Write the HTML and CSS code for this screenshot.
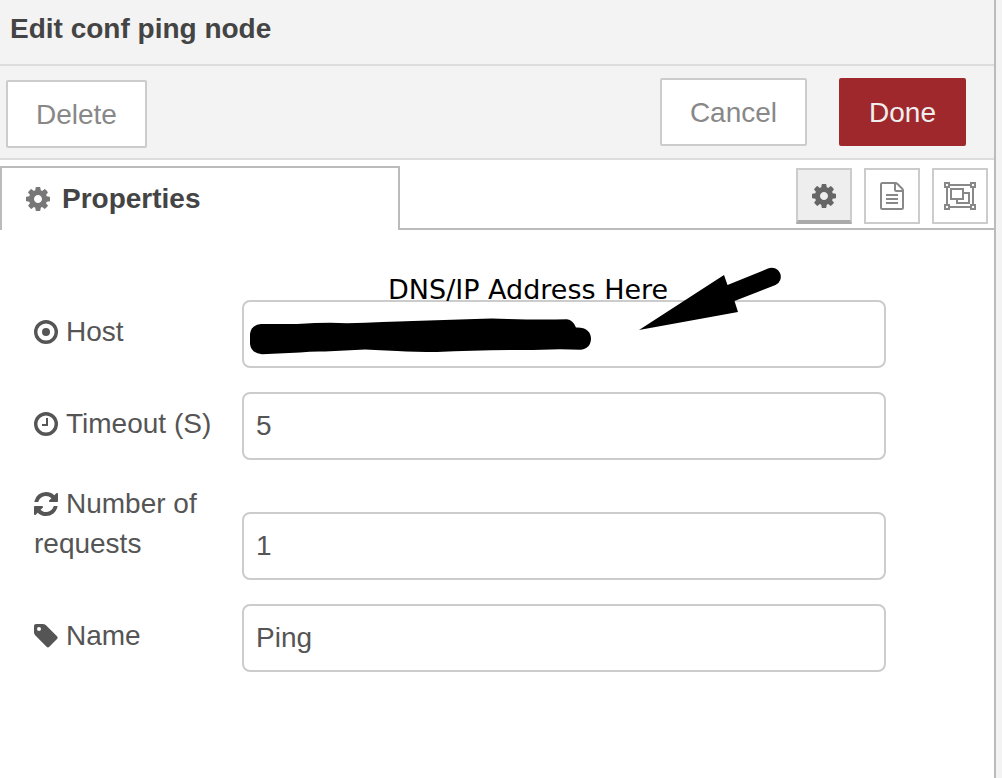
FILE: index.html
```
<!DOCTYPE html>
<html lang="en">
<head>
<meta charset="utf-8">
<title>Edit conf ping node</title>
<link rel="stylesheet" href="styles.css">
</head>
<body>
<svg class="symbols" aria-hidden="true">
  <symbol id="cog" viewBox="128 128 1536 1536"><path d="M1152 896q0-106-75-181t-181-75-181 75-75 181 75 181 181 75 181-75 75-181zm512-109v222q0 12-8 23t-20 13l-185 28q-19 54-39 91 35 50 107 138 10 12 10 25t-9 23q-27 37-99 108t-94 71q-12 0-26-9l-138-108q-44 23-91 38-16 136-29 186-7 28-36 28h-222q-14 0-24.5-8.5t-11.5-21.5l-28-184q-49-16-90-37l-141 107q-10 9-25 9-14 0-25-11-126-114-165-168-7-10-7-23 0-12 8-23 15-21 51-66.5t54-70.5q-27-50-41-99l-183-27q-13-2-21-12.5t-8-23.5v-222q0-12 8-23t19-13l186-28q14-46 39-92-40-57-107-138-10-12-10-24 0-10 9-23 26-36 98.5-107.5t94.5-71.5q13 0 26 10l138 107q44-23 91-38 16-136 29-186 7-28 36-28h222q14 0 24.5 8.5t11.5 21.5l28 184q49 16 90 37l142-107q9-9 24-9 13 0 25 10 129 119 165 170 7 8 7 22 0 12-8 23-15 21-51 66.5t-54 70.5q26 50 41 98l183 28q13 2 21 12.5t8 23.5z"/></symbol>
</svg>
<main class="tray">
  <header class="tray-header"><h1 class="tray-title">Edit conf ping node</h1></header>
  <div class="toolbar">
    <button class="button button-delete" type="button">Delete</button>
    <button class="button button-cancel" type="button">Cancel</button>
    <button class="button button-done" type="button">Done</button>
  </div>
  <div class="tabs">
    <button class="tab" type="button"><svg class="icon" aria-hidden="true"><use href="#cog"/></svg>Properties</button>
    <div class="tab-tools">
      <button class="tool tool-active" type="button" aria-label="Properties"><svg class="icon" aria-hidden="true"><use href="#cog"/></svg></button>
      <button class="tool" type="button" aria-label="Description">
        <svg class="icon-file" viewBox="0 0 24 28" aria-hidden="true"><path class="line" d="M15.5 1H2.5Q1 1 1 2.500V25.500Q1 27 2.500 27H21.500Q23 27 23 25.500V8.500Q23 7.500 22 6.500L17.500 2Q16.500 1 15.500 1ZM15 1V7.500Q15 9 16.500 9H23"/><path class="rule" d="M6 13H18M6 17H18M6 21H18"/></svg>
      </button>
      <button class="tool" type="button" aria-label="Appearance">
        <svg class="icon-group" viewBox="0 0 32 28" aria-hidden="true"><path class="line" d="M6 3H26M6 25H26M3 6V22M29 6V22M1 1H5V5H1ZM27 1H31V5H27ZM1 23H5V27H1ZM27 23H31V27H27ZM7 7H19V17H7ZM19 11H25V21H13V17"/></svg>
      </button>
    </div>
  </div>
  <form class="form">
    <div class="row">
      <label class="label" for="host"><svg class="icon icon-label" viewBox="0 0 24 24" aria-hidden="true"><circle class="ring" cx="12" cy="12" r="10.300"/><circle cx="12" cy="12" r="4"/></svg>Host</label>
      <div class="field">
        <input class="input" id="host" type="text">
        <svg class="marks" viewBox="242 260 560 110" aria-hidden="true">
          <path d="M250 334Q251 325 261 324L297 324Q328 322 347 323.300Q385 322 413 321L475 319Q492 318 508 319Q540 320 567 319.300Q573 320 576 327.500C586 327 591 332 591 338.500C591 345 587 349.700 580 349.700L560 349.300L533 350Q480 350 437 352Q415 352 397 351Q380 350 365 349.500L325 351.500Q313 351 300 352.500L262 354.300Q251 353 250 344Z"/>
          <path d="M639 330L724 275L727.500 285L768 268.500A9 9 0 0 1 775.500 285L734.500 301L738 312Z"/>
        </svg>
        <span class="note">DNS/IP Address Here</span>
      </div>
    </div>
    <div class="row">
      <label class="label" for="timeout"><svg class="icon icon-label" viewBox="0 0 24 24" aria-hidden="true"><circle class="ring" cx="12" cy="12" r="10.300"/><path class="hand" d="M13 6V13H8"/></svg>Timeout (S)</label>
      <div class="field"><input class="input" id="timeout" type="text" value="5"></div>
    </div>
    <div class="row">
      <label class="label" for="requests"><svg class="icon icon-label" viewBox="128 128 1536 1536" aria-hidden="true"><path d="M1639 1056q0 5-1 7-64 268-268 434.500t-478 166.500q-146 0-282.500-55t-243.500-157l-129 129q-19 19-45 19t-45-19-19-45v-448q0-26 19-45t45-19h448q26 0 45 19t19 45-19 45l-137 137q71 66 161 102t187 36q134 0 250-65t186-179q11-17 53-117 8-23 30-23h192q13 0 22.500 9.500t9.500 22.500zm25-800v448q0 26-19 45t-45 19h-448q-26 0-45-19t-19-45 19-45l138-138q-148-137-349-137-134 0-250 65t-186 179q-11 17-53 117-8 23-30 23h-199q-13 0-22.500-9.500t-9.500-22.500v-7q65-268 270-434.500t480-166.500q146 0 284 55.500t245 156.500l130-129q19-19 45-19t45 19 19 45z"/></svg>Number of requests</label>
      <div class="field"><input class="input" id="requests" type="text" value="1"></div>
    </div>
    <div class="row">
      <label class="label" for="name"><svg class="icon icon-label" viewBox="0 0 24 24" aria-hidden="true"><path fill-rule="evenodd" d="M0 2Q0 0 2 0H8.500Q10.500 0 12 1.300L23 12.300Q24.200 13.700 23 15L15.300 22.800Q14 24 12.600 22.800L1.400 11.500Q0 10 0 8.500ZM5 3A2 2 0 1 0 5 7A2 2 0 1 0 5 3Z"/></svg>Name</label>
      <div class="field"><input class="input" id="name" type="text" value="Ping"></div>
    </div>
  </form>
</main>
</body>
</html>
```
FILE: styles.css
```
* { box-sizing: border-box; }
body {
  margin: 0;
  background: #f3f3f3;
  color: #555;
  font: 28px/40px "Liberation Sans", Arial, sans-serif;
}
button, input { font: inherit; color: inherit; }
.symbols { display: none; }
.tray {
  display: flex;
  flex-direction: column;
  min-height: 100vh;
  margin-right: 6px;
  border-right: 2px solid #bbb;
  background: #fff;
}
.tray-header {
  padding: 9px 10px 15px;
  border-bottom: 2px solid #ddd;
  background: #f3f3f3;
}
.tray-title {
  margin: 0;
  color: #444;
  font-size: 28px;
  line-height: 40px;
}
.toolbar {
  display: flex;
  align-items: flex-start;
  padding: 12px 28px 10px 6px;
  border-bottom: 2px solid #ddd;
  background: #f3f3f3;
}
.button {
  height: 68px;
  padding: 2px 28px 0;
  border: 2px solid #ccc;
  border-radius: 2px;
  background: #fff;
  color: #888;
}
.button-delete { margin: 2px auto 0 0; }
.button-cancel { margin-right: 32px; }
.button-done {
  border-color: #9e282b;
  background: #9e282b;
  color: #eee;
}
.tabs {
  display: flex;
  justify-content: space-between;
  height: 70px;
  padding-top: 6px;
  background: linear-gradient(#bbb, #bbb) bottom / 100% 2px no-repeat;
}
.tab {
  display: flex;
  align-items: center;
  gap: 12px;
  width: 400px;
  padding: 0 24px;
  border: 2px solid #bbb;
  border-bottom: 0;
  background: #fff;
  color: #444;
  font-weight: bold;
}
.tab .icon { fill: #777; }
.tab-tools {
  display: flex;
  gap: 12px;
  padding: 2px 6px 0 0;
}
.tool {
  display: flex;
  align-items: center;
  justify-content: center;
  width: 56px;
  height: 56px;
  padding: 0;
  border: 2px solid #ccc;
  background: #fff;
}
.tool-active {
  padding-top: 2px;
  border-bottom: 4px solid #aaa;
  background: #eee;
}
.tool .icon { fill: #666; }
.icon { width: 24px; height: 24px; flex: none; fill: #555; }
.icon-file { width: 24px; height: 28px; }
.icon-group { width: 32px; height: 28px; }
.line, .rule { fill: none; stroke: #888; stroke-width: 2; }
.icon-label { margin-right: 8px; vertical-align: -3px; }
.ring { fill: none; stroke: #555; stroke-width: 3.400; }
.hand { fill: none; stroke: #555; stroke-width: 2; }
.form {
  display: flex;
  flex-direction: column;
  gap: 24px;
  padding: 70px 40px 24px 34px;
}
.row {
  display: flex;
  align-items: flex-end;
}
.label {
  width: 208px;
  padding: 0 28px 16px 0;
}
.field { position: relative; width: 70%; }
.input {
  display: block;
  width: 100%;
  height: 68px;
  padding: 0 12px;
  border: 2px solid #ccc;
  border-radius: 8px;
  background: #fff;
}
.marks {
  position: absolute;
  top: -40px;
  left: 0;
  width: 560px;
  height: 110px;
  pointer-events: none;
}
.note {
  position: absolute;
  top: -30px;
  left: 146px;
  color: #000;
  font: 27px/40px "DejaVu Sans", Verdana, sans-serif;
  white-space: nowrap;
}
```
